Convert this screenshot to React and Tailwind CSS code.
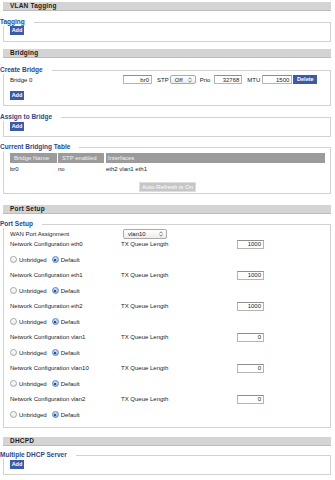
import React from "react"

function Header({ title, className = "" }) {
  return (
    <div
      className={`ml-[3px] w-[328px] h-[9px] bg-[#d4d4d4] border-b border-[#bcbcbc] pl-[7px] flex items-center text-[6.5px] font-bold leading-none text-[#1c1c1c] tracking-[0.2px] ${className}`}
    >
      {title}
    </div>
  )
}

function Box({ legend, className = "", inner = "", children }) {
  return (
    <fieldset className={`ml-[3px] w-[328px] border border-[#d2d2d2] p-0 ${className}`}>
      <legend className="ml-[-4px] pr-[9px] text-[6.5px] leading-[8px] font-bold text-[#2c4987]">{legend}</legend>
      <div className={`pl-[6px] pr-[5px] ${inner}`}>{children}</div>
    </fieldset>
  )
}

function BlueButton({ children, className = "" }) {
  return (
    <button className={`h-[9px] bg-[#3a5ba8] text-white text-[5.5px] font-bold leading-none flex items-center justify-center ${className}`}>
      {children}
    </button>
  )
}

function TextBox({ value, className = "" }) {
  return (
    <div
      className={`h-[9px] bg-white border border-[#b4b4b4] border-t-[#8e8e8e] text-[6px] leading-none text-right pr-[2px] flex items-center justify-end text-[#222] ${className}`}
    >
      {value}
    </div>
  )
}

function Arrows() {
  return (
    <svg width="4" height="6" viewBox="0 0 4 6" className="shrink-0">
      <path d="M0.5 2.4 L2 0.8 L3.5 2.4" fill="none" stroke="#555" strokeWidth="0.7" />
      <path d="M0.5 3.6 L2 5.2 L3.5 3.6" fill="none" stroke="#555" strokeWidth="0.7" />
    </svg>
  )
}

function Select({ value, className = "" }) {
  return (
    <div
      className={`bg-gradient-to-b from-white to-[#ececec] border border-[#aaaaaa] rounded-[2px] flex items-center justify-between pl-[4px] pr-[3px] text-[6px] leading-none text-[#222] ${className}`}
    >
      <span>{value}</span>
      <Arrows />
    </div>
  )
}

function Radio({ checked, label }) {
  return (
    <div className="flex items-center">
      {checked ? (
        <span className="w-[7px] h-[7px] rounded-full border border-[#5b86c9] bg-gradient-to-b from-[#cfe0f7] to-[#8fb3e6] flex items-center justify-center">
          <span className="w-[2px] h-[2px] rounded-full bg-[#1d2a3d]" />
        </span>
      ) : (
        <span className="w-[7px] h-[7px] rounded-full border border-[#a5a5a5] bg-gradient-to-b from-white to-[#e9e9e9]" />
      )}
      <span className="ml-[2px] text-[6px] leading-none text-[#222]">{label}</span>
    </div>
  )
}

const ports = [
  { name: "eth0", q: "1000" },
  { name: "eth1", q: "1000" },
  { name: "eth2", q: "1000" },
  { name: "vlan1", q: "0" },
  { name: "vlan10", q: "0" },
  { name: "vlan2", q: "0" },
]

export default function App() {
  return (
    <div className="w-[335px] h-[480px] bg-white overflow-hidden pt-[2px] font-['Liberation_Sans',Arial,sans-serif] text-[#222]">
      {/* VLAN Tagging */}
      <Header title="VLAN Tagging" />
      <Box legend="Tagging" className="mt-[7px]" inner="pb-[6px]">
        <BlueButton className="w-[14px]">Add</BlueButton>
      </Box>

      {/* Bridging */}
      <Header title="Bridging" className="mt-[7px]" />
      <Box legend="Create Bridge" className="mt-[8px]" inner="pb-[5px]">
        <div className="mt-[1px] h-[9px] flex items-center text-[6px] leading-none">
          <span className="w-[113px]">Bridge 0</span>
          <TextBox value="br0" className="w-[29px]" />
          <span className="ml-[5px]">STP</span>
          <Select value="Off" className="ml-[1px] w-[26px] h-[9px]" />
          <span className="ml-[4px]">Prio</span>
          <TextBox value="32768" className="ml-[4px] w-[28px]" />
          <span className="ml-[5px]">MTU</span>
          <TextBox value="1500" className="ml-[2px] w-[30px]" />
          <BlueButton className="ml-[1px] w-[24px]">Delete</BlueButton>
        </div>
        <BlueButton className="mt-[7px] w-[14px]">Add</BlueButton>
      </Box>

      <Box legend="Assign to Bridge" className="mt-[7px]" inner="pt-[1px] pb-[5px]">
        <BlueButton className="w-[14px]">Add</BlueButton>
      </Box>

      <Box legend="Current Bridging Table" className="mt-[6px]" inner="pb-[1px]">
        <div className="mt-[2px] h-[10px] flex text-[6px] leading-none text-[#f2f2f2]">
          <div className="w-[47px] bg-[#9b9b9b] pl-[4px] flex items-center">Bridge Name</div>
          <div className="ml-[1px] w-[46px] bg-[#9b9b9b] pl-[4px] flex items-center">STP enabled</div>
          <div className="ml-[2px] flex-1 bg-[#9b9b9b] pl-[2px] flex items-center">Interfaces</div>
        </div>
        <div className="mt-[1px] h-[10px] flex items-center text-[6px] leading-none">
          <div className="w-[48px]">br0</div>
          <div className="w-[48px]">no</div>
          <div className="flex-1">eth2 vlan1 eth1</div>
        </div>
        <div className="mt-[8px] flex justify-center">
          <button className="w-[57px] h-[10px] bg-[#c6c6c6] border border-[#dedede] text-white text-[6px] leading-none">
            Auto-Refresh is On
          </button>
        </div>
      </Box>

      {/* Port Setup */}
      <Header title="Port Setup" className="mt-[11px]" />
      <Box legend="Port Setup" className="mt-[6px]" inner="pb-[2px]">
        <div className="mt-[1px] h-[10px] flex items-center text-[6px] leading-none">
          <span className="w-[113px]">WAN Port Assignment</span>
          <Select value="vlan10" className="w-[44px] h-[10px]" />
        </div>
        {ports.map((p) => (
          <div key={p.name}>
            <div className="h-[10px] flex items-center text-[6px] leading-none">
              <span className="w-[111px]">Network Configuration {p.name}</span>
              <span className="w-[116px]">TX Queue Length</span>
              <TextBox value={p.q} className="w-[27px]" />
            </div>
            <div className="h-[21px] flex items-center gap-[5px]">
              <Radio label="Unbridged" />
              <Radio checked label="Default" />
            </div>
          </div>
        ))}
      </Box>

      {/* DHCPD */}
      <Header title="DHCPD" className="mt-[9px]" />
      <Box legend="Multiple DHCP Server" className="mt-[5px]" inner="pt-[1px] pb-[5px]">
        <BlueButton className="w-[14px]">Add</BlueButton>
      </Box>
    </div>
  )
}
